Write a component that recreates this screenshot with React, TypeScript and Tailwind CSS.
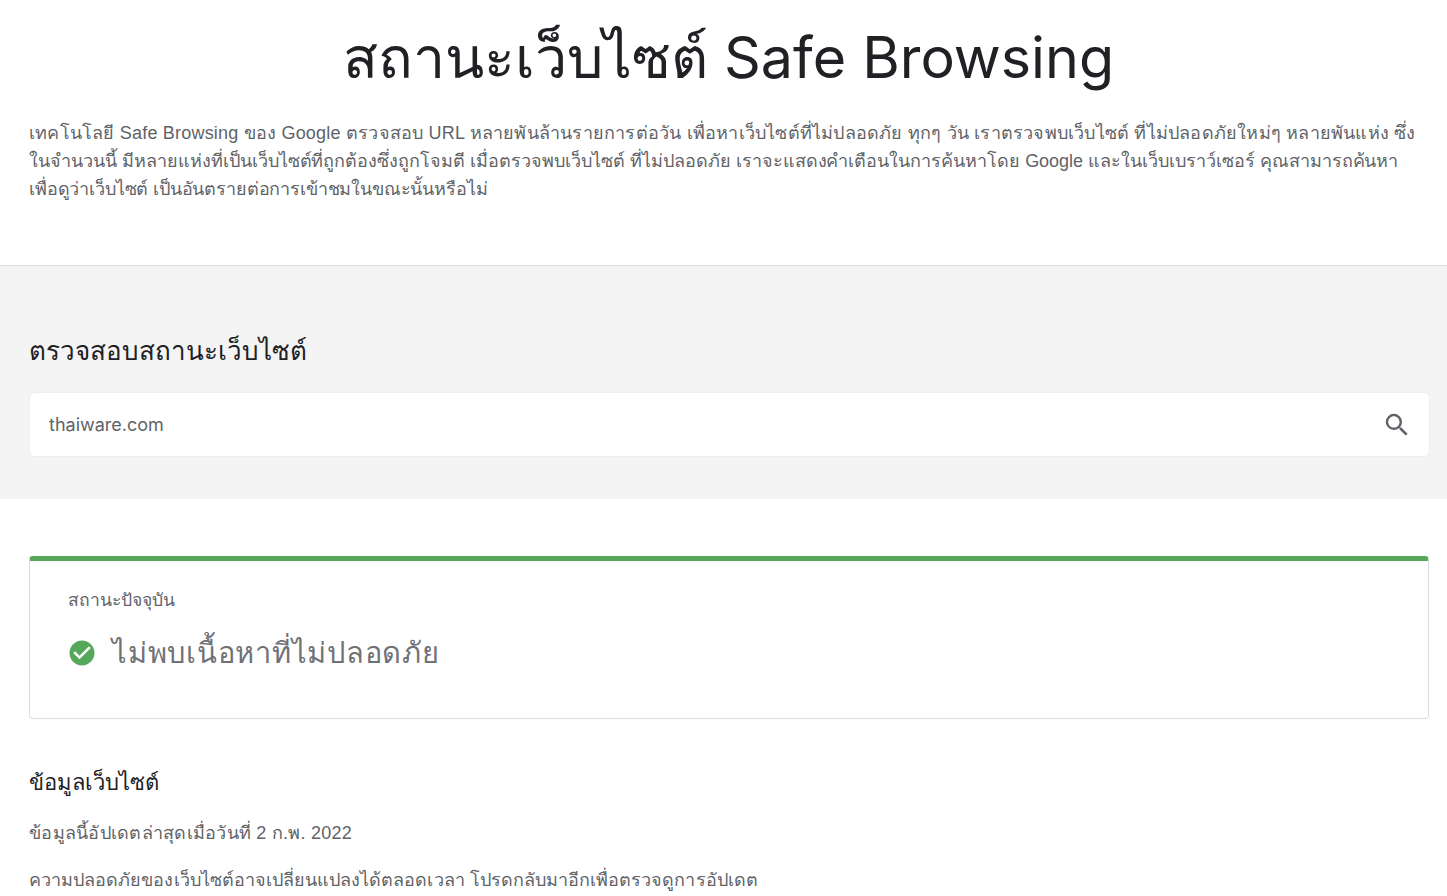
import React from 'react';

const body = { fontFamily: '"Liberation Sans", "Noto Sans", sans-serif' };
const display = { fontFamily: 'Inter, "Noto Sans", sans-serif' };

export default function App() {
  return (
    <div className="h-[896px] overflow-hidden bg-white text-[#202124]" style={body}>
      <header className="h-[265px] px-[29px] pt-[17px]">
        <h1 className="pl-[10px] text-center text-[57.4px] leading-[80px] font-normal text-[#202124]" style={display}>สถานะเว็บไซต์ Safe Browsing</h1>
        <p className="mt-[22px] text-[18px] leading-[28px] whitespace-nowrap text-[#5f6368]">
          <span className="block tracking-[0.2px]">เทคโนโลยี Safe Browsing ของ Google ตรวจสอบ URL หลายพันล้านรายการต่อวัน เพื่อหาเว็บไซต์ที่ไม่ปลอดภัย ทุกๆ วัน เราตรวจพบเว็บไซต์ ที่ไม่ปลอดภัยใหม่ๆ หลายพันแห่ง ซึ่ง</span>
          <span className="block tracking-[-0.02px]">ในจำนวนนี้ มีหลายแห่งที่เป็นเว็บไซต์ที่ถูกต้องซึ่งถูกโจมตี เมื่อตรวจพบเว็บไซต์ ที่ไม่ปลอดภัย เราจะแสดงคำเตือนในการค้นหาโดย Google และในเว็บเบราว์เซอร์ คุณสามารถค้นหา</span>
          <span className="block tracking-[-0.15px]">เพื่อดูว่าเว็บไซต์ เป็นอันตรายต่อการเข้าชมในขณะนั้นหรือไม่</span>
        </p>
      </header>
      <section className="h-[234px] border-t border-[#dadce0] bg-[#f4f4f4] px-[29px] pt-[65px]" style={display}>
        <h2 className="text-[26px] leading-[40px] font-normal text-[#202124]">ตรวจสอบสถานะเว็บไซต์</h2>
        <div className="mt-[21px] flex h-[65px] w-[1401px] items-center justify-between rounded-[6px] border border-[#eeeeee] bg-white pr-[17px] pl-[19px]">
          <span className="text-[18px] text-[#5f6368]">thaiware.com</span>
          <svg width="30" height="30" viewBox="0 0 24 24" fill="#5f6368">
            <path d="M15.5 14h-.79l-.28-.27A6.47 6.47 0 0 0 16 9.5 6.5 6.5 0 1 0 9.5 16c1.61 0 3.09-.59 4.23-1.57l.27.28v.79l5 4.99L20.49 19l-4.99-5zm-6 0C7.01 14 5 11.99 5 9.5S7.01 5 9.5 5 14 7.01 14 9.5 11.99 14 9.5 14z" />
          </svg>
        </div>
      </section>
      <main className="px-[29px] pt-[57px]">
        <div className="h-[163px] w-[1400px] rounded-[4px] border border-t-[5px] border-[#dadce0] border-t-[#55a75a] px-[38px] pt-[26px]">
          <div className="text-[17.6px] leading-[26px] text-[#5f6368]">สถานะปัจจุบัน</div>
          <div className="mt-[20px] flex items-center gap-[15px]">
            <svg width="30" height="30" viewBox="0 0 24 24" className="-ml-[1px] shrink-0" fill="#55a75a">
              <path d="M12 2C6.48 2 2 6.48 2 12s4.48 10 10 10 10-4.48 10-10S17.52 2 12 2zm-2 15-5-5 1.41-1.41L10 14.17l7.59-7.59L19 8l-9 9z" />
            </svg>
            <span className="text-[29px] leading-[40px] tracking-[0.75px] text-[#6f7276]">ไม่พบเนื้อหาที่ไม่ปลอดภัย</span>
          </div>
        </div>
        <h3 className="mt-[44px] text-[22px] leading-[40px] font-normal text-[#202124]">ข้อมูลเว็บไซต์</h3>
        <p className="mt-[16px] text-[18px] leading-[28px] tracking-[0.25px] text-[#5f6368]">ข้อมูลนี้อัปเดตล่าสุดเมื่อวันที่ 2 ก.พ. 2022</p>
        <p className="mt-[19px] text-[18px] leading-[28px] tracking-[0.04px] text-[#5f6368]">ความปลอดภัยของเว็บไซต์อาจเปลี่ยนแปลงได้ตลอดเวลา โปรดกลับมาอีกเพื่อตรวจดูการอัปเดต</p>
      </main>
    </div>
  );
}
